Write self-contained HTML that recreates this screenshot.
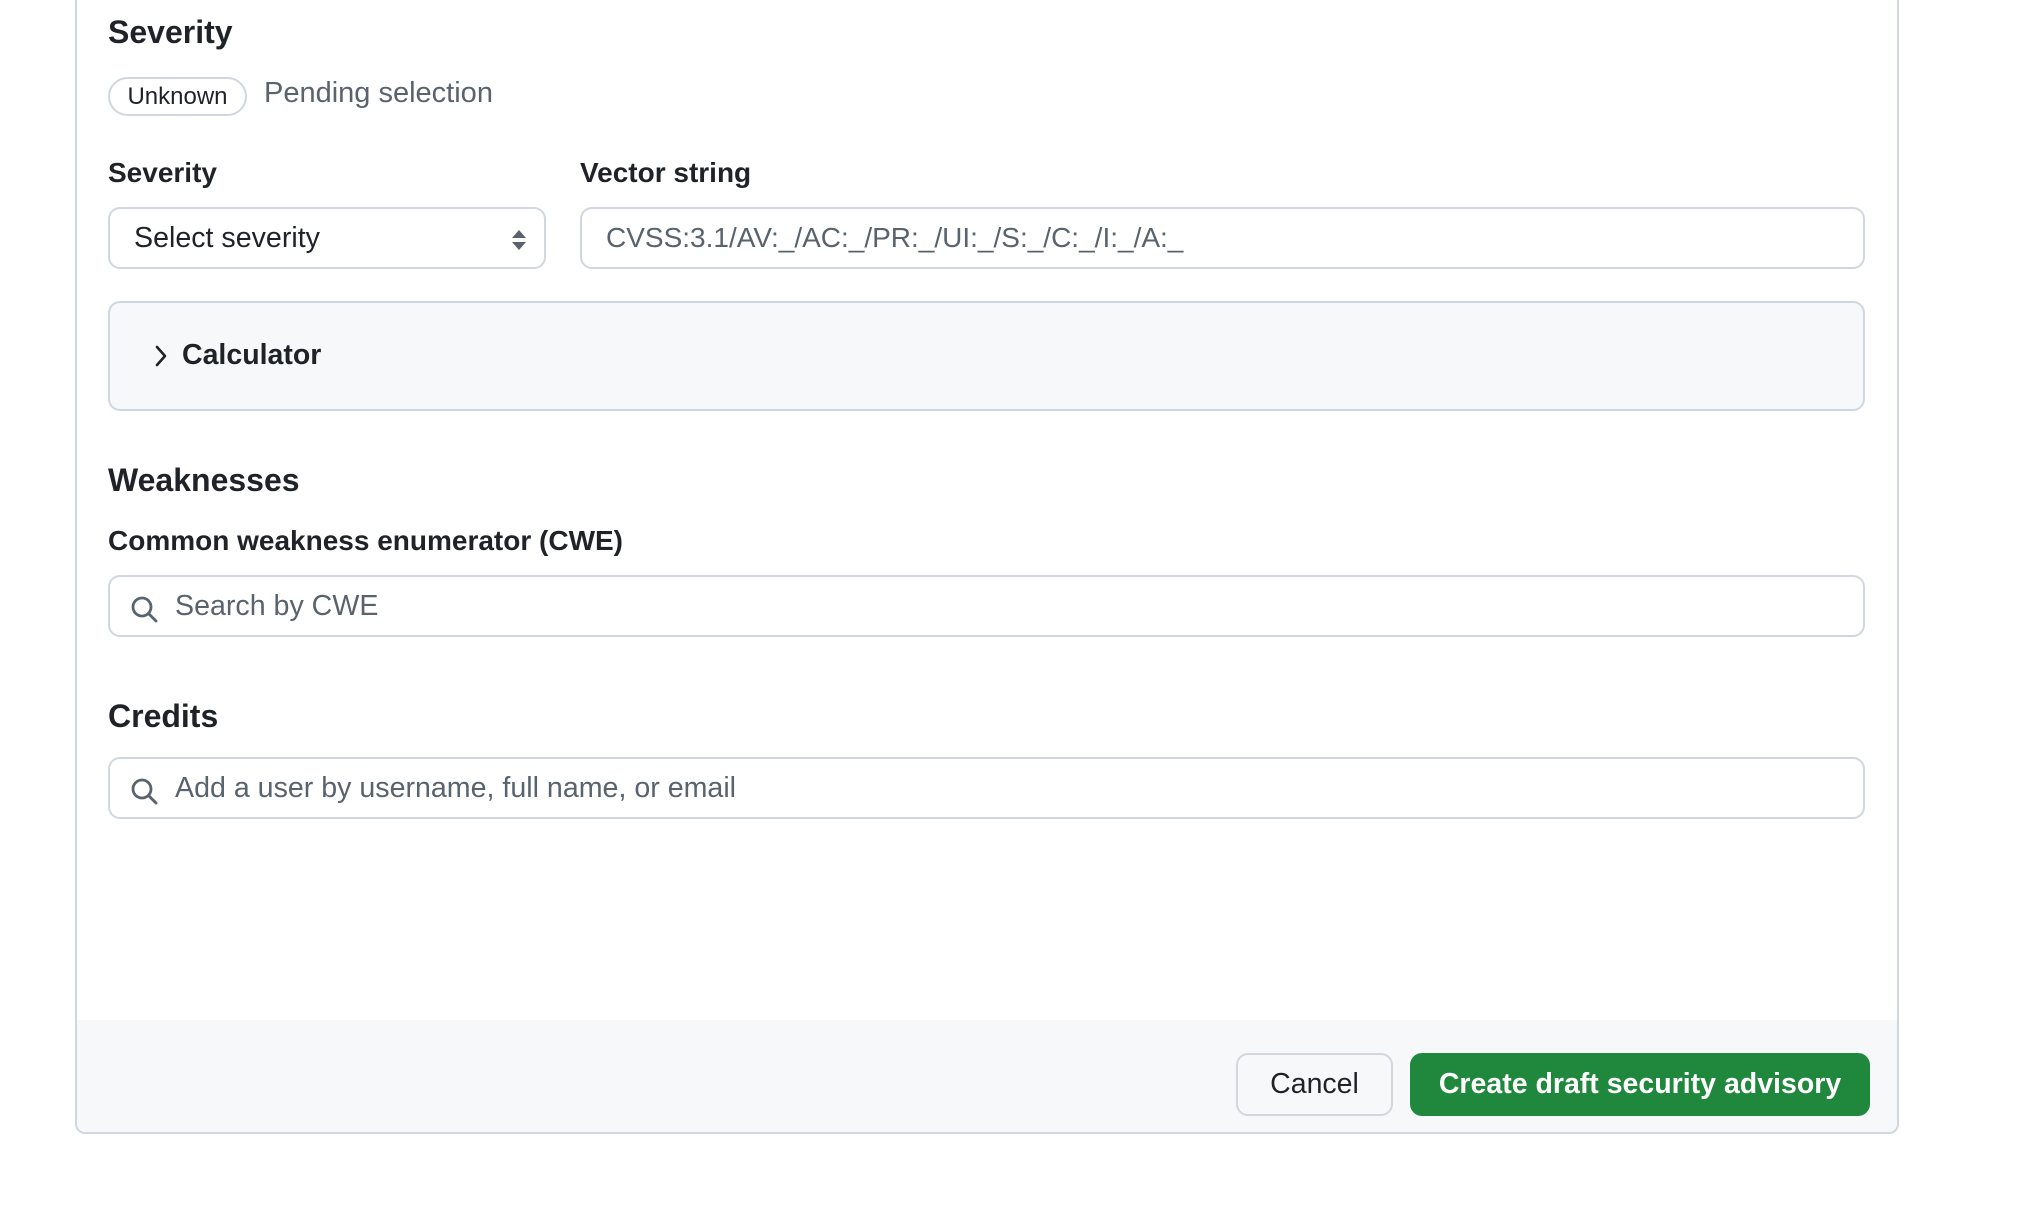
<!DOCTYPE html>
<html><head><meta charset="utf-8"><style>
*{box-sizing:border-box;margin:0;padding:0}
body{width:2036px;height:1212px;background:#fff;font-family:"Liberation Sans",sans-serif;color:#1f2328;position:relative;overflow:hidden}
.panel{position:absolute;left:75px;top:-20px;width:1824px;height:1154px;border:2px solid #d0d7de;border-radius:0 0 10px 10px;overflow:hidden}
.abs{position:absolute}
h3{position:absolute;font-size:32px;font-weight:bold;line-height:40px}
.lbl{position:absolute;font-size:28px;font-weight:bold;line-height:34px}
.inp{position:absolute;border:2px solid #d0d7de;border-radius:12px;background:#fff;font-size:28.6px;line-height:58px}
.ph{color:#59636e}
</style></head><body>
<div class="panel">
<div class="abs" style="left:0;top:1038px;width:1824px;height:120px;background:#f6f8fa"></div>
</div>
<h3 style="left:108px;top:12px">Severity</h3>
<div class="abs" style="left:108px;top:77px;width:139px;height:39px;border:2px solid #d0d7de;border-radius:20px;font-size:24px;line-height:35px;text-align:center;font-weight:500">Unknown</div>
<div class="abs ph" style="left:264px;top:75px;font-size:29px;line-height:36px">Pending selection</div>
<div class="lbl" style="left:108px;top:156px">Severity</div>
<div class="lbl" style="left:580px;top:156px">Vector string</div>
<div class="inp" style="left:108px;top:207px;width:438px;height:62px;padding-left:24px">Select severity
<svg style="position:absolute;right:16px;top:20px" width="18" height="22" viewBox="0 0 18 22"><path d="M9 1 L16 9 H2Z M9 21 L16 13 H2Z" fill="#59636e"/></svg></div>
<div class="inp ph" style="left:580px;top:207px;width:1285px;height:62px;padding-left:24px;font-size:28px">CVSS:3.1/AV:_/AC:_/PR:_/UI:_/S:_/C:_/I:_/A:_</div>
<div class="abs" style="left:108px;top:301px;width:1757px;height:110px;border:2px solid #d0d7de;border-radius:12px;background:#f6f8fa">
<svg style="position:absolute;left:44px;top:42px" width="14" height="22" viewBox="0 0 14 22"><path d="M3 2 L11 11 L3 20" fill="none" stroke="#1f2328" stroke-width="2.6" stroke-linecap="round" stroke-linejoin="round"/></svg>
<div class="abs" style="left:72px;top:34px;font-size:28.5px;font-weight:bold;line-height:36px">Calculator</div></div>
<h3 style="left:108px;top:460px">Weaknesses</h3>
<div class="lbl" style="left:108px;top:524px">Common weakness enumerator (CWE)</div>
<div class="inp ph" style="left:108px;top:575px;width:1757px;height:62px;padding-left:65px">Search by CWE
<svg style="position:absolute;left:20px;top:18px" width="30" height="30" viewBox="0 0 30 30"><circle cx="12" cy="12" r="9" fill="none" stroke="#59636e" stroke-width="2.8"/><path d="M19 19 L26 26" stroke="#59636e" stroke-width="2.8" stroke-linecap="round"/></svg></div>
<h3 style="left:108px;top:696px">Credits</h3>
<div class="inp ph" style="left:108px;top:757px;width:1757px;height:62px;padding-left:65px">Add a user by username, full name, or email
<svg style="position:absolute;left:20px;top:18px" width="30" height="30" viewBox="0 0 30 30"><circle cx="12" cy="12" r="9" fill="none" stroke="#59636e" stroke-width="2.8"/><path d="M19 19 L26 26" stroke="#59636e" stroke-width="2.8" stroke-linecap="round"/></svg></div>
<div class="abs" style="left:1236px;top:1053px;width:157px;height:63px;border:2px solid #d0d7de;border-radius:12px;background:#f6f8fa;font-size:28.5px;line-height:59px;text-align:center;font-weight:500">Cancel</div>
<div class="abs" style="left:1410px;top:1053px;width:460px;height:63px;border-radius:12px;background:#1f883d;color:#fff;font-size:28.5px;line-height:63px;text-align:center;font-weight:bold">Create draft security advisory</div>
</body></html>
